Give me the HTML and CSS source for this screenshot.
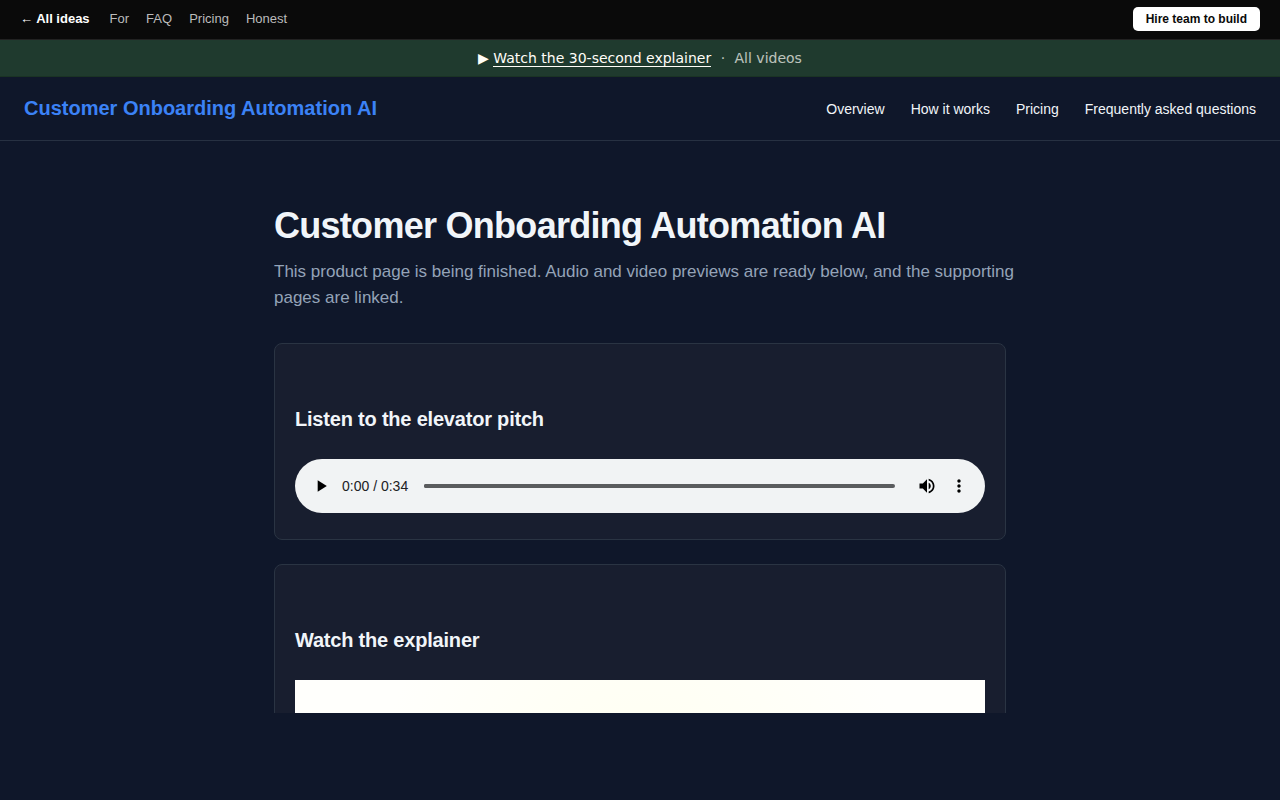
FILE: index.html
```
<!DOCTYPE html>
<html lang="en">
<head>
    <meta charset="UTF-8">
    <meta name="viewport" content="width=device-width, initial-scale=1.0">
    <title>Customer Onboarding Automation AI</title>
    <link rel="stylesheet" href="styles.css">
</head>
<body>
    <div class="topbar">
        <nav class="topbar-links" aria-label="Ideas">
            <a class="back" href="#">← All ideas</a>
            <a href="#">For</a>
            <a href="#">FAQ</a>
            <a href="#">Pricing</a>
            <a href="#">Honest</a>
        </nav>
        <a class="hire" href="#">Hire team to build</a>
    </div>

    <div class="video-banner">
        ▶ <a class="watch" href="#">Watch the 30-second explainer</a>
        <span class="dot">·</span>
        <a class="all" href="#">All videos</a>
    </div>

    <header class="site-header">
        <a class="brand" href="#">Customer Onboarding Automation AI</a>
        <nav class="site-nav" aria-label="Main">
            <a href="#">Overview</a>
            <a href="#">How it works</a>
            <a href="#">Pricing</a>
            <a href="#">Frequently asked questions</a>
        </nav>
    </header>

    <main class="content">
        <h1>Customer Onboarding Automation AI</h1>
        <p class="lead">This product page is being finished. Audio and video previews are ready below, and the supporting pages are linked.</p>

        <section class="card">
            <h2>Listen to the elevator pitch</h2>
            <div class="player">
                <button type="button" class="play" aria-label="Play">
                    <svg viewBox="0 0 24 24" width="20" height="20"><path d="M8 5v14l11-7z"/></svg>
                </button>
                <span class="time">0:00 / 0:34</span>
                <input class="seek" type="range" min="0" max="34" value="0" aria-label="Seek">
                <button type="button" aria-label="Mute">
                    <svg viewBox="0 0 24 24" width="20" height="20"><path d="M3 9v6h4l5 5V4L7 9H3zm13.5 3c0-1.77-1.02-3.29-2.5-4.03v8.05c1.48-.73 2.5-2.25 2.5-4.02zM14 3.23v2.06c2.89.86 5 3.54 5 6.71s-2.11 5.85-5 6.71v2.06c4.01-.91 7-4.49 7-8.77s-2.99-7.86-7-8.77z"/></svg>
                </button>
                <button type="button" aria-label="More options">
                    <svg viewBox="0 0 24 24" width="20" height="20"><path d="M12 8c1.1 0 2-.9 2-2s-.9-2-2-2-2 .9-2 2 .9 2 2 2zm0 2c-1.1 0-2 .9-2 2s.9 2 2 2 2-.9 2-2-.9-2-2-2zm0 6c-1.1 0-2 .9-2 2s.9 2 2 2 2-.9 2-2-.9-2-2-2z"/></svg>
                </button>
            </div>
        </section>

        <section class="card">
            <h2>Watch the explainer</h2>
            <div class="video"></div>
        </section>
    </main>

    <div class="footer-bar"></div>
</body>
</html>
```

FILE: styles.css
```
* {
    box-sizing: border-box;
}
body {
    margin: 0;
    height: 100vh;
    display: flex;
    flex-direction: column;
    overflow: hidden;
    font-family: "Liberation Sans", Arial, sans-serif;
    font-size: 16px;
    line-height: 26px;
    background: #0f172a;
    color: #f1f5f9;
}
a {
    color: inherit;
    text-decoration: none;
}
.topbar {
    display: flex;
    flex-shrink: 0;
    align-items: center;
    justify-content: space-between;
    padding: 7px 20px 8px;
    background: #0a0a0a;
    border-bottom: 1px solid #222;
    font-size: 13px;
    line-height: 24px;
    color: #bbb;
}
.topbar-links {
    display: flex;
    gap: 17px;
}
.topbar-links .back {
    margin-right: 3px;
    font-weight: bold;
    color: #fff;
}
.hire {
    padding: 0 13px;
    border-radius: 5px;
    background: #fff;
    color: #0a0a0a;
    font-size: 12px;
    font-weight: bold;
}
.video-banner {
    flex-shrink: 0;
    padding: 8px 16px;
    background: #1f3a2e;
    border-bottom: 1px solid #1a3324;
    color: #fffef8;
    font-family: "DejaVu Sans", sans-serif;
    font-size: 14px;
    line-height: 20px;
    text-align: center;
}
.video-banner .watch {
    border-bottom: 1px solid #fffef8;
}
.video-banner .dot {
    margin: 0 5px;
    opacity: 0.7;
}
.video-banner .all {
    opacity: 0.7;
}
.site-header {
    display: flex;
    flex-shrink: 0;
    align-items: center;
    justify-content: space-between;
    padding: 16px 24px;
    border-bottom: 1px solid #273142;
}
.brand {
    font-size: 20px;
    font-weight: bold;
    line-height: 31px;
    color: #3b82f6;
}
.site-nav {
    display: flex;
    gap: 26px;
    font-size: 14px;
}
.content {
    flex: 1;
    min-height: 0;
    overflow: hidden;
    width: 100%;
    max-width: 780px;
    margin: 0 auto;
    padding: 64px 24px 0;
}
h1 {
    margin: 0 0 12px;
    font-size: 36px;
    line-height: 42px;
    letter-spacing: -0.02em;
}
.lead {
    margin: 0 -12px 32px 0;
    font-size: 17px;
    color: #94a3b8;
}
.card {
    margin-bottom: 24px;
    padding: 20px;
    border: 1px solid #2a3443;
    border-radius: 8px;
    background: #181e2f;
}
.card h2 {
    margin: 40px 0 25px;
    font-size: 20px;
    line-height: 30px;
    letter-spacing: -0.01em;
}
.player {
    display: flex;
    align-items: center;
    height: 54px;
    margin-bottom: 6px;
    padding: 0 10px;
    border-radius: 27px;
    background: #f1f3f4;
    color: #202124;
    font-size: 14px;
}
.player button {
    display: flex;
    align-items: center;
    justify-content: center;
    width: 32px;
    height: 32px;
    padding: 0;
    border: none;
    background: none;
    cursor: pointer;
}
.time {
    margin: 0 16px 0 5px;
    line-height: 20px;
}
.seek {
    flex: 1;
    min-width: 0;
    height: 4px;
    margin: 0 16px 0 0;
    appearance: none;
    border-radius: 2px;
    background: #5a5c5e;
}
.seek::-webkit-slider-thumb {
    appearance: none;
    width: 4px;
    height: 4px;
    border-radius: 2px;
    background: #5a5c5e;
}
.video {
    aspect-ratio: 16 / 9;
    background: radial-gradient(circle at 50% 30%, #fffff0, #fffffc 60%);
}
.footer-bar {
    flex-shrink: 0;
    height: 87px;
    background: #0f172a;
}
```
